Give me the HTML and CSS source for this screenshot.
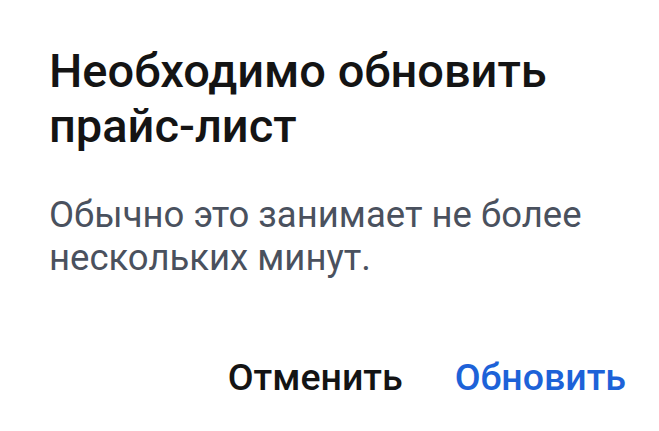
FILE: index.html
```html
<!DOCTYPE html>
<html lang="ru">
<head>
<meta charset="utf-8">
<link rel="stylesheet" href="styles.css">
</head>
<body>
<div class="dialog">
  <h1 class="title">Необходимо обновить прайс-лист</h1>
  <p class="text">Обычно это занимает не более нескольких минут.</p>
  <div class="actions">
    <button class="btn btn-cancel">Отменить</button>
    <button class="btn btn-ok">Обновить</button>
  </div>
</div>
</body>
</html>
```
FILE: styles.css
```css
html, body {
  margin: 0;
  padding: 0;
  background: #ffffff;
}
body {
  width: 659px;
  height: 431px;
  font-family: Roboto, "Noto Sans", sans-serif;
}
.dialog {
  box-sizing: border-box;
  width: 659px;
  height: 431px;
  padding: 43px 33px 0 49px;
  display: flex;
  flex-direction: column;
}
.title {
  margin: 0;
  font-size: 47px;
  font-weight: 500;
  line-height: 55px;
  color: #141414;
}
.text {
  margin: 40px 0 0 0;
  font-size: 36.5px;
  font-weight: 400;
  line-height: 43px;
  color: #4a515e;
}
.actions {
  margin-top: 76px;
  display: flex;
  justify-content: flex-end;
  gap: 52px;
}
.btn {
  border: 0;
  background: none;
  padding: 0;
  font-family: Roboto, "Noto Sans", sans-serif;
  font-size: 37.5px;
  font-weight: 500;
  line-height: 44px;
}
.btn-cancel { color: #141414; }
.btn-ok { color: #1d62d8; }
```
